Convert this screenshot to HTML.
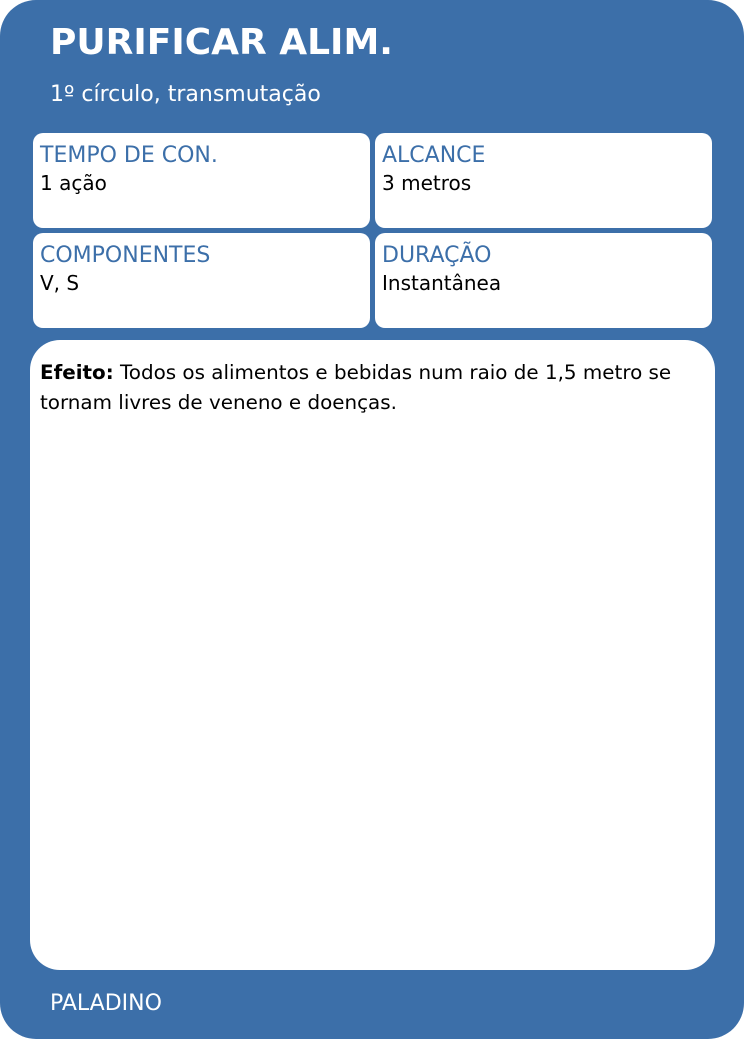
<!DOCTYPE html>
<html><head><meta charset="utf-8"><style>
*{margin:0;padding:0;box-sizing:border-box}
body{width:744px;height:1039px;background:#fff;font-family:"DejaVu Sans",sans-serif;position:relative;overflow:hidden}
.card{position:absolute;left:0;top:0;width:744px;height:1039px;background:#3c6fa9;border-radius:36px}
.t{position:absolute;color:#fff;white-space:nowrap}
.box{position:absolute;background:#fff;border-radius:10px;padding:9px 7px}
.lab{color:#3c6fa9;font-size:22px;line-height:28px}
.val{font-size:20px;line-height:26px;color:#000}
.eff{position:absolute;left:30px;top:340px;width:685px;height:630px;background:#fff;border-radius:30px;padding:18px 10px;font-size:19.9px;line-height:30px;color:#000}
</style></head><body>
<div class="card"></div>
<div class="t" style="left:50px;top:21px;font-size:36px;font-weight:bold;line-height:44px">PURIFICAR ALIM.</div>
<div class="t" style="left:50px;top:81px;font-size:22px;line-height:28px">1º círculo, transmutação</div>
<div class="box" style="left:33px;top:133px;width:337px;height:95px"><div class="lab">TEMPO DE CON.</div><div class="val">1 ação</div></div>
<div class="box" style="left:375px;top:133px;width:337px;height:95px"><div class="lab">ALCANCE</div><div class="val">3 metros</div></div>
<div class="box" style="left:33px;top:233px;width:337px;height:95px"><div class="lab">COMPONENTES</div><div class="val">V, S</div></div>
<div class="box" style="left:375px;top:233px;width:337px;height:95px"><div class="lab">DURAÇÃO</div><div class="val">Instantânea</div></div>
<div class="eff"><b>Efeito:</b> Todos os alimentos e bebidas num raio de 1,5 metro se tornam livres de veneno e doenças.</div>
<div class="t" style="left:50px;top:990px;font-size:22px;line-height:28px">PALADINO</div>
</body></html>
